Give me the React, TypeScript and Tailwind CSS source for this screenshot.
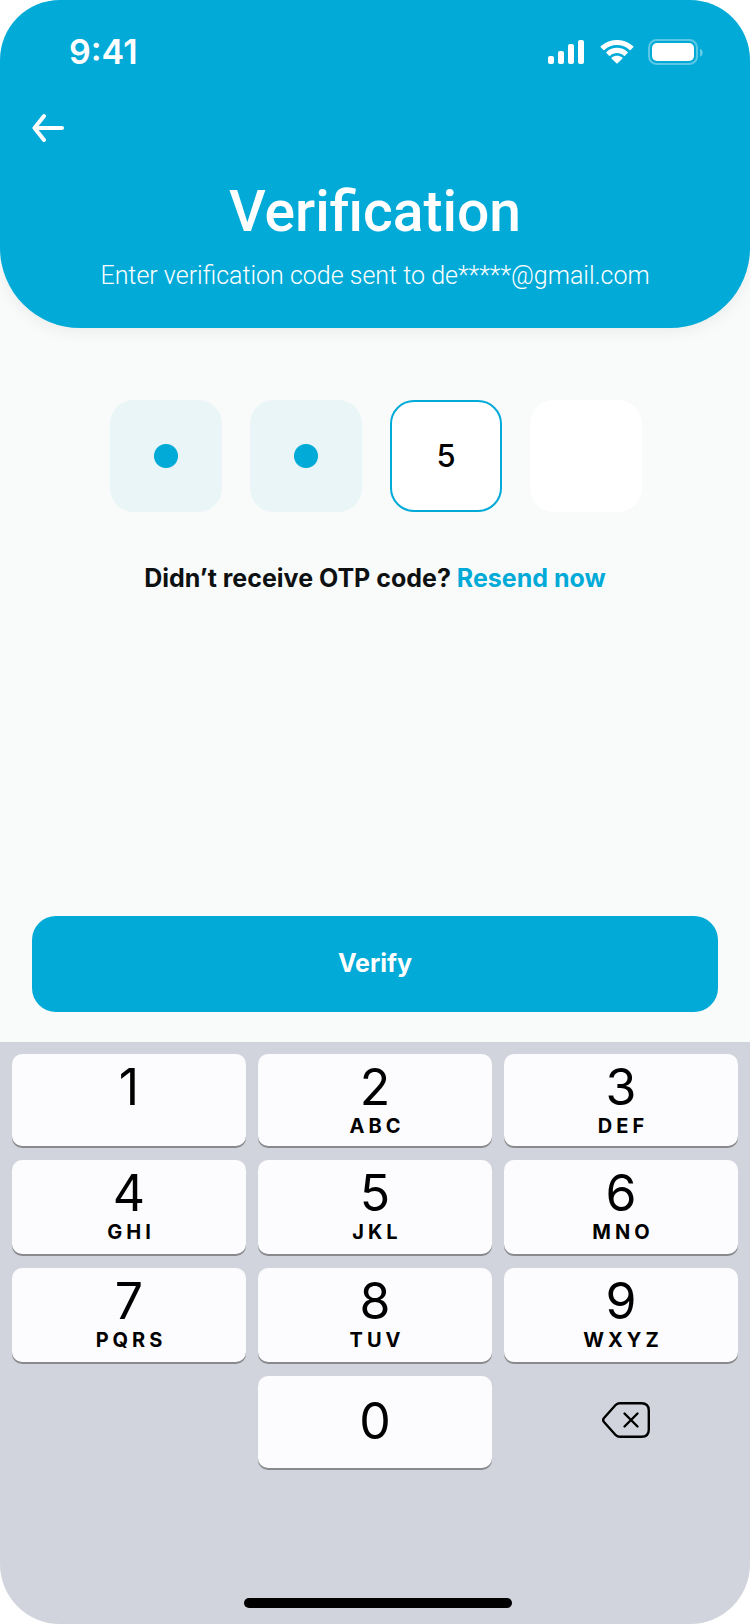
import { useState } from "react";

type KeyDef = { digit: string; letters: string };

const KEYS: KeyDef[] = [
  { digit: "1", letters: "" },
  { digit: "2", letters: "ABC" },
  { digit: "3", letters: "DEF" },
  { digit: "4", letters: "GHI" },
  { digit: "5", letters: "JKL" },
  { digit: "6", letters: "MNO" },
  { digit: "7", letters: "PQRS" },
  { digit: "8", letters: "TUV" },
  { digit: "9", letters: "WXYZ" },
];

const CODE_LENGTH = 4;

function StatusBar() {
  return (
    <div className="flex h-12 items-center justify-between pr-[46px] pl-[69px]">
      <span className="font-['Inter',sans-serif] text-[34px] leading-10 font-semibold">9:41</span>
      <div className="flex items-center">
        <svg className="mr-4 h-6 w-9" viewBox="0 0 36 24" fill="currentColor" aria-hidden="true">
          <rect x="0" y="16" width="6" height="8" rx="2" />
          <rect x="10" y="11" width="6" height="13" rx="2" />
          <rect x="20" y="4" width="6" height="20" rx="2" />
          <rect x="30" y="0" width="6" height="24" rx="2" />
        </svg>
        <svg className="mr-3.5 h-6 w-[34px]" viewBox="0 0 34 24" fill="currentColor" aria-hidden="true">
          <path d="M17 5c4.7 0 9.2 1.8 12.600 5 .3.25.7.25 1 0l2.700-2.700c.3-.3.3-.8 0-1.100C24.200-2.100 9.800-2.100.7 6.200c-.3.3-.3.8 0 1.100L3.400 10c.3.3.7.3 1 0C7.800 6.800 12.300 5 17 5Z" />
          <path d="M17 13c2.500 0 5 .95 6.900 2.700.3.3.7.3 1 0l2.700-2.700c.3-.3.3-.8 0-1.100-6-5.500-15.200-5.500-21.200 0-.3.3-.3.800 0 1.100l2.700 2.700c.3.3.7.3 1 0C12 13.950 14.500 13 17 13Z" />
          <path d="M22.300 18.700c.3-.3.3-.8 0-1.100-3-2.500-7.500-2.500-10.600 0-.3.3-.3.8 0 1.100l4.700 4.600c.3.300.8.300 1.200 0l4.700-4.600Z" />
        </svg>
        <svg className="h-[26px] w-14" viewBox="0 0 56 26" fill="none" aria-hidden="true">
          <rect x="1" y="1" width="48" height="24" rx="7.500" stroke="currentColor" strokeOpacity="0.35" strokeWidth="2" />
          <rect x="4" y="4" width="42" height="18" rx="5" fill="currentColor" />
          <path d="M52 9.800v8c1.600-.7 2.700-2.200 2.700-4s-1.100-3.300-2.700-4Z" fill="currentColor" fillOpacity="0.4" />
        </svg>
      </div>
    </div>
  );
}

function CodeInput({ code }: { code: string }) {
  return (
    <div role="group" aria-label="Verification code" className="flex justify-center gap-7 pl-0.5">
      {Array.from({ length: CODE_LENGTH }, (_, i) => {
        const last = i === code.length - 1;
        const filled = i < code.length - 1;
        const tone = last
          ? "border-2 border-[#02aad8] bg-white"
          : filled
            ? "bg-[#e9f5f7] bg-[radial-gradient(circle,#02aad8_11.5px,transparent_12.5px)] text-transparent"
            : "bg-white";
        return (
          <input
            key={i}
            type={filled ? "password" : "text"}
            inputMode="none"
            readOnly
            aria-label={`Digit ${i + 1}`}
            value={code[i] ?? ""}
            className={`size-28 rounded-3xl pb-0.5 text-center font-['Inter',sans-serif] text-[31px] font-medium text-black outline-none ${tone} ${filled ? "pb-0" : ""}`}
          />
        );
      })}
    </div>
  );
}

const KEY_CLASS =
  "flex flex-col items-center rounded-[10px] bg-[#fcfcfe] text-black shadow-[0_2px_0_#898a8d]";

function Keypad({ onDigit, onDelete }: { onDigit: (d: string) => void; onDelete: () => void }) {
  return (
    <section
      aria-label="Keypad"
      className="flex flex-col bg-[#d1d4dc] px-3 pt-3 pb-4 font-['Inter',sans-serif]"
    >
      <div className="grid grid-cols-3 grid-rows-[92px_94px_94px_92px] gap-x-3 gap-y-3.5">
        {KEYS.map(({ digit, letters }) => (
          <button key={digit} type="button" onClick={() => onDigit(digit)} className={`${KEY_CLASS} pt-[5px]`}>
            <span className="text-[50px] leading-14">{digit}</span>
            <span className="pl-1 text-xl leading-[22px] font-bold tracking-[4px]">{letters}</span>
          </button>
        ))}
        <button type="button" onClick={() => onDigit("0")} className={`${KEY_CLASS} col-start-2 justify-center pb-0.5`}>
          <span className="text-[50px] leading-14">0</span>
        </button>
        <button type="button" aria-label="Delete" onClick={onDelete} className="flex items-center justify-center pb-1 pl-2.5">
          <svg
            className="h-9 w-12"
            viewBox="0 0 48 36"
            fill="none"
            stroke="#000"
            strokeWidth="2.400"
            strokeLinecap="round"
            strokeLinejoin="round"
            aria-hidden="true"
          >
            <path d="M17.800 1.200H39.500C44.500 1.200 46.800 3.500 46.800 8.500V27.500C46.800 32.500 44.500 34.800 39.500 34.800H17.800C16 34.800 15 34.300 13.800 33.200L2 20C.9 18.700.9 17.300 2 16L13.800 2.800C15 1.700 16 1.200 17.800 1.200Z" />
            <path d="M22.500 11.500 35.500 24.500M35.500 11.500 22.500 24.500" />
          </svg>
        </button>
      </div>
      <div className="mt-[130px] ml-1.5 h-2.5 w-[268px] self-center rounded-full bg-black" />
    </section>
  );
}

export default function App() {
  const [code, setCode] = useState("285");

  return (
    <div className="flex min-h-screen flex-col overflow-hidden rounded-[60px] bg-[#f9fbfa] font-['Inter',sans-serif]">
      <header className="rounded-b-[80px] bg-[#02aad8] pt-7 pb-[34px] text-white shadow-[0_4px_16px_rgba(0,0,0,0.06)]">
        <StatusBar />
        <div className="px-8 pt-9">
          <button type="button" aria-label="Back" className="block">
            <svg
              className="h-8 w-8"
              viewBox="0 0 32 32"
              fill="none"
              stroke="currentColor"
              strokeWidth="4"
              strokeLinecap="round"
              strokeLinejoin="round"
              aria-hidden="true"
            >
              <path d="M30 16H2.500M12 4 2.500 16 12 28" />
            </svg>
          </button>
        </div>
        <div className="px-8 pt-8 text-center">
          <h1 className="font-['Roboto',sans-serif] text-[57px] leading-[72px] font-medium">Verification</h1>
          <p className="pt-2.5 font-['Roboto',sans-serif] text-[25px] leading-9 font-light">
            Enter verification code sent to de*****@gmail.com
          </p>
        </div>
      </header>

      <main className="flex flex-1 flex-col px-8 pt-[72px] pb-[30px]">
        <CodeInput code={code} />
        <p className="pt-12 text-center text-[25px] leading-9 font-bold text-[#0d1112]">
          Didn’t receive OTP code?{" "}
          <a href="#resend" className="text-[#02aad8]">
            Resend now
          </a>
        </p>
        <button
          type="button"
          className="mt-auto h-24 rounded-3xl bg-[#02aad8] text-[25px] font-bold text-white"
        >
          Verify
        </button>
      </main>

      <Keypad
        onDigit={(d) => setCode((c) => (c.length < CODE_LENGTH ? c + d : c))}
        onDelete={() => setCode((c) => c.slice(0, -1))}
      />
    </div>
  );
}
